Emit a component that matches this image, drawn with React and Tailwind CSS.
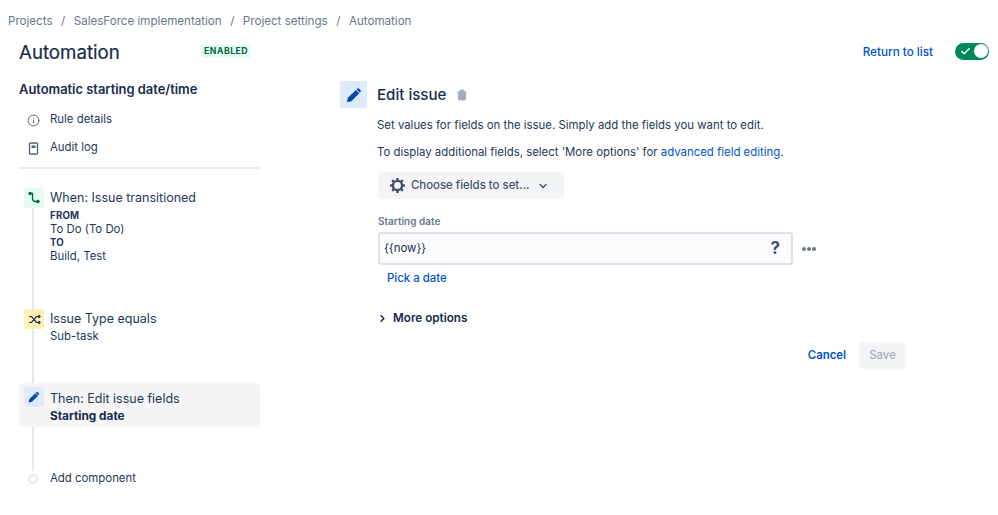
import React from "react";
import { Info, Trash2, ChevronDown, ChevronRight, Check } from "lucide-react";

const Pencil = ({ size = 16 }) => (
  <svg width={size} height={size} viewBox="0 0 16 16" fill="#0747a6">
    <path d="M9.9 2.9l3.4 3.4-7.9 7.9-4.6 1.1 1.1-4.6z" />
    <path d="M11 1.8a1.5 1.5 0 0 1 2.1 0l1.3 1.3a1.5 1.5 0 0 1 0 2.1l-.5.5-3.4-3.4z" />
  </svg>
);

const Step = ({ bg, icon, className = "", children }) => (
  <div className={`flex gap-[6px] pl-[5px] rounded-[3px] ${className}`}>
    <div className={`w-5 h-5 rounded-[3px] shrink-0 flex items-center justify-center relative ${bg}`}>{icon}</div>
    <div className="min-w-0">{children}</div>
  </div>
);

export default function App() {
  return (
    <div className="w-[998px] h-[515px] overflow-hidden bg-white text-[#253858] text-[11.4px] font-['Inter',sans-serif]">
      <div className="flex items-center h-[20px] mt-[11px] pl-[8px] text-[#6b778c] text-[11.6px] leading-5 gap-[8.5px]">
        <span>Projects</span><span>/</span>
        <span>SalesForce implementation</span><span>/</span>
        <span>Project settings</span><span>/</span>
        <span>Automation</span>
      </div>
      <div className="flex">
        <aside className="w-[241px] ml-[19px] shrink-0">
          <div className="flex items-center h-[30px] mt-[7px]">
            <h1 className="text-[18.7px] leading-[30px] text-[#172b4d] font-normal [-webkit-text-stroke:0.2px_#172b4d] w-[182px]">Automation</h1>
            <span className="bg-[#e3fcef] text-[#006644] text-[8.7px] leading-[13px] font-bold tracking-[0.5px] px-[3px] rounded-[3px] -mt-[3px]">ENABLED</span>
          </div>
          <h2 className="text-[12.9px] leading-5 font-semibold text-[#172b4d] mt-[12px]">Automatic starting date/time</h2>
          <div className="flex items-center h-[28px] mt-[6px] pl-[8px] gap-[10px]">
            <Info size={13} color="#505f79" strokeWidth={1.8} />
            <span>Rule details</span>
          </div>
          <div className="flex items-center h-[28px] pl-[8px] gap-[10px]">
            <svg width="13" height="13" viewBox="0 0 13 13" fill="none" stroke="#505f79" strokeWidth="1.3">
              <rect x="2.5" y="1" width="8" height="11" rx="1" />
              <path d="M4.5 3.5h4v2.5h-4z" fill="#505f79" stroke="none" />
            </svg>
            <span>Audit log</span>
          </div>
          <div className="h-[2px] bg-[#ebecf0] mt-[5px]" />
          <div className="relative mt-[19px]">
            <div className="absolute left-[13px] top-[10px] h-[273px] w-[2px] bg-[#e8e9ef]" />
            <Step
              bg="bg-[#e3fcef]"
              icon={
                <svg width="14" height="14" viewBox="0 0 14 14" fill="none" stroke="#006644" strokeWidth="1.3">
                  <path d="M3 2.5h2.5v5a3 3 0 0 0 3 3H11" />
                  <circle cx="3" cy="2.5" r="1" fill="#006644" />
                  <circle cx="11" cy="10.5" r="1" fill="#006644" />
                </svg>
              }
              className="h-[121px]"
            >
              <div className="text-[12.5px] leading-5">When: Issue transitioned</div>
              <div className="text-[9.7px] leading-[13px] font-bold mt-[1px] tracking-[0.2px]">FROM</div>
              <div className="leading-[14px]">To Do (To Do)</div>
              <div className="text-[9.7px] leading-[13px] font-bold tracking-[0.2px]">TO</div>
              <div className="leading-[14px]">Build, Test</div>
            </Step>
            <Step
              bg="bg-[#fff0b3]"
              icon={
                <svg width="13" height="13" viewBox="0 0 13 13" fill="none" stroke="#172b4d" strokeWidth="1.2">
                  <path d="M1 3.5h2.5l5 6H11.5M1 9.5h2.5l5-6H11.5" />
                  <path d="M10.5 2l1.5 1.5L10.5 5M10.5 8l1.5 1.5L10.5 11" />
                </svg>
              }
              className="h-[74px]"
            >
              <div className="text-[12.5px] leading-5">Issue Type equals</div>
              <div className="leading-4 -mt-[1px]">Sub-task</div>
            </Step>
            <div className="relative flex gap-[6px] pl-[5px] h-[44px] bg-[#f4f4f4]/90 rounded-[3px] pt-[4px]">
              <div className="w-5 h-5 rounded-[3px] shrink-0 flex items-center justify-center bg-[#deebff]"><Pencil size={12} /></div>
              <div>
                <div className="text-[12.5px] leading-5 mt-[2px]">Then: Edit issue fields</div>
                <div className="font-bold text-[11.8px] leading-4 -mt-[1px] text-[#172b4d]">Starting date</div>
              </div>
            </div>
            <div className="relative flex items-center h-[20px] mt-[42px] pl-[9px] gap-[12px]">
              <div className="w-[10px] h-[10px] rounded-full bg-white border-2 border-[#e6e7ec] shrink-0" />
              <span>Add component</span>
            </div>
          </div>
        </aside>
        <main className="flex-1 ml-[80px] mr-[9px] min-w-0">
          <div className="flex justify-end items-center h-[30px] mt-[5px]">
            <a className="text-[#0052cc] font-medium mr-[22px] mt-[3px] text-[11.7px]">Return to list</a>
            <div className="w-[34px] h-[17px] rounded-full bg-[#00875a] flex items-center justify-between pl-[5px] pr-[1px]">
              <Check size={11} color="#fff" strokeWidth={3} />
              <div className="w-[14px] h-[14px] rounded-full bg-white" />
            </div>
          </div>
          <div className="flex items-center mt-[15px] gap-[10px]">
            <div className="w-[27px] h-[27px] rounded-[3px] bg-[#deebff] flex items-center justify-center"><Pencil size={16} /></div>
            <h3 className="text-[15.1px] leading-6 text-[#172b4d] font-medium">Edit issue</h3>
            <Trash2 size={12} fill="#a5adba" color="#a5adba" />
          </div>
          <div className="ml-[37px]">
            <p className="leading-[20px] mt-[7px]">Set values for fields on the issue. Simply add the fields you want to edit.</p>
            <p className="leading-[20px] mt-[7px]">To display additional fields, select 'More options' for <a className="text-[#0052cc]">advanced field editing</a>.</p>
            <button className="flex items-center h-[27px] w-[186px] ml-[1px] mt-[10px] bg-[#f4f5f7] rounded-[3px] pl-[11px] text-[#42526e] font-medium">
              <svg width="17" height="17" viewBox="0 0 24 24" fill="none" stroke="#42526e" strokeWidth="3.4" className="mr-[5px]">
                <circle cx="12" cy="12" r="6.5" />
                <path d="M12 1.5v4M12 18.5v4M1.5 12h4M18.5 12h4M4.5 4.5l3 3M16.5 16.5l3 3M4.5 19.5l3-3M16.5 7.5l3-3" />
              </svg>
              Choose fields to set...
              <ChevronDown size={12} strokeWidth={2.8} className="ml-[7px]" />
            </button>
            <label className="block text-[10px] leading-[14px] font-semibold text-[#6b778c] ml-[1px] mt-[15px]">Starting date</label>
            <div className="flex items-center ml-[1px] mt-[4px]">
              <div className="w-[415px] h-[33px] border-2 border-[#dfe1e6] rounded-[3px] bg-[#fafbfc] flex items-center justify-between pl-[4px] pr-[11px] text-[#172b4d]">
                <span>{"{{now}}"}</span>
                <span className="text-[#42526e] text-[17px] font-bold">?</span>
              </div>
              <div className="flex gap-[1px] ml-[9px]">
                <i className="w-[4px] h-[4px] rounded-full bg-[#6b778c]" />
                <i className="w-[4px] h-[4px] rounded-full bg-[#6b778c]" />
                <i className="w-[4px] h-[4px] rounded-full bg-[#6b778c]" />
              </div>
            </div>
            <a className="block text-[#0052cc] font-medium leading-5 ml-[10px] mt-[3px]">Pick a date</a>
            <div className="flex items-center mt-[20px] font-semibold text-[#172b4d] leading-5 text-[11.7px]">
              <ChevronRight size={11} strokeWidth={3.2} className="mr-[5px]" />
              More options
            </div>
            <div className="flex justify-end items-center w-[529px] mt-[14px]">
              <a className="text-[#0052cc] font-semibold mr-[13px]">Cancel</a>
              <div className="w-[47px] h-[27px] rounded-[3px] bg-[#f4f5f7] text-[#a5adba] font-medium flex items-center justify-center">Save</div>
            </div>
          </div>
        </main>
      </div>
    </div>
  );
}
